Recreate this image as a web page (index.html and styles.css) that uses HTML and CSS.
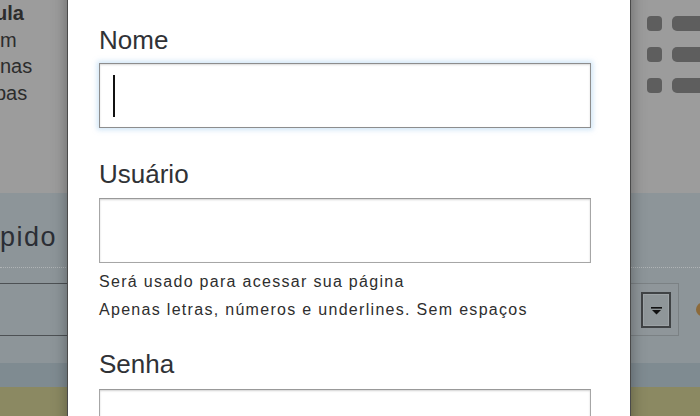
FILE: index.html
```html
<!DOCTYPE html>
<html lang="pt">
<head>
<meta charset="utf-8">
<title>Cadastro</title>
<link rel="stylesheet" href="styles.css">
</head>
<body>
<div class="page">
  <div class="top">
    <div class="intro">
      <p class="intro-line bold"><span class="cut4">ula</span></p>
      <p class="intro-line">m</p>
      <p class="intro-line">nas</p>
      <p class="intro-line"><span class="cut3">pas</span></p>
    </div>
    <ul class="menu">
      <li class="menu-item"><span class="dot"></span><span class="bar"></span></li>
      <li class="menu-item"><span class="dot"></span><span class="bar"></span></li>
      <li class="menu-item"><span class="dot"></span><span class="bar"></span></li>
    </ul>
  </div>
  <div class="content">
    <div class="section">
      <h2 class="section-title">pido</h2>
    </div>
    <div class="filter-row">
      <div class="table-part"></div>
      <div class="select">
        <div class="select-btn">
          <svg width="11" height="8" viewBox="0 0 11 8"><rect x="0" y="0" width="11" height="1.6" fill="#111"/><path d="M1 3h9l-4.5 4.5z" fill="#111"/></svg>
        </div>
      </div>
      <div class="row-end"><span class="badge"></span></div>
    </div>
    <div class="gap-band"></div>
  </div>
  <div class="blue-band"></div>
  <div class="olive-band"></div>
</div>

<div class="modal">
  <form class="form">
    <label class="label first">Nome</label>
    <div class="field focused"><span class="caret"></span></div>

    <label class="label second">Usuário</label>
    <div class="field"></div>
    <p class="help help-first">Será usado para acessar sua página</p>
    <p class="help">Apenas letras, números e underlines. Sem espaços</p>

    <label class="label third">Senha</label>
    <div class="field"></div>
  </form>
</div>
</body>
</html>
```

FILE: styles.css
```css
* { box-sizing: border-box; }
html, body {
  margin: 0;
  padding: 0;
  width: 700px;
  height: 416px;
  overflow: hidden;
  font-family: "Liberation Sans", Arial, sans-serif;
}
.page {
  width: 700px;
  height: 416px;
  display: flex;
  flex-direction: column;
  background: #9a9a9a;
}
.top {
  height: 193px;
  flex: none;
  display: flex;
  justify-content: space-between;
  background: #9c9c9c;
}
.intro {
  width: 67px;
  overflow: hidden;
}
.intro-line {
  margin: 0;
  font-size: 20px;
  line-height: 26.5px;
  color: #2c2c2c;
  white-space: nowrap;
}
.intro-line.bold { font-weight: bold; }
.cut4 { margin-left: -5px; }
.cut3 { margin-left: -5px; }
.menu {
  list-style: none;
  margin: 0;
  padding: 16px 0 0 0;
  width: 53px;
  display: flex;
  flex-direction: column;
  gap: 16px;
}
.menu-item {
  display: flex;
  gap: 10px;
  height: 15px;
}
.dot {
  width: 15px;
  height: 15px;
  border-radius: 4px;
  background: #5e5e5e;
  flex: none;
}
.bar {
  width: 40px;
  height: 15px;
  border-radius: 5px;
  background: #5e5e5e;
  flex: none;
}
.content {
  background: #8d9599;
  flex: none;
}
.section {
  height: 75px;
  border-bottom: 1px dotted #b0b4b6;
  padding-top: 28px;
}
.section-title {
  margin: 0;
  font-weight: normal;
  font-size: 27px;
  line-height: 32px;
  color: #2b2e35;
  letter-spacing: 1.5px;
}
.filter-row {
  margin-top: 15px;
  height: 53px;
  display: flex;
  align-items: stretch;
}
.table-part {
  width: 631px;
  border-top: 1px solid #4d5154;
  border-bottom: 1px solid #4d5154;
}
.select {
  width: 48px;
  border: 1px solid #7b8184;
  border-left: none;
  background: #8f969a;
  display: flex;
  align-items: center;
  padding-left: 10px;
}
.select-btn {
  width: 30px;
  height: 36px;
  border: 2px solid #404345;
  box-shadow: inset 0 0 0 1px #9da3a6;
  background: #8f9699;
  display: flex;
  align-items: center;
  justify-content: center;
}
.select-btn svg { margin-top: 2px; }
.row-end {
  flex: 1;
  position: relative;
  overflow: hidden;
}
.badge {
  position: absolute;
  left: 17px;
  top: 20px;
  width: 12px;
  height: 13px;
  border-radius: 50%;
  background: #8c6a3a;
}
.gap-band {
  height: 27px;
}
.blue-band {
  height: 24px;
  flex: none;
  background: #7f8b91;
}
.olive-band {
  flex: 1;
  background: #8b8962;
}

.modal {
  position: absolute;
  left: 67px;
  top: -20px;
  width: 564px;
  height: 460px;
  background: #ffffff;
  border-left: 1px solid #4a4a4a;
  border-right: 1px solid #4a4a4a;
  box-shadow: 0 0 14px rgba(0, 0, 0, 0.35);
}
.form {
  padding: 45px 0 0 31px;
  display: flex;
  flex-direction: column;
  align-items: flex-start;
}
.label {
  font-size: 26px;
  line-height: 30px;
  color: #303236;
}
.label.first { margin-bottom: 8px; }
.label.second { margin-top: 31px; margin-bottom: 9px; }
.label.third { margin-top: 25px; margin-bottom: 10px; }
.field {
  width: 492px;
  height: 65px;
  border: 1px solid #a6a6a6;
  border-top-color: #999;
  box-shadow: inset 0 1px 2px rgba(0, 0, 0, 0.18);
  background: #fff;
  display: flex;
  align-items: center;
  padding-left: 13px;
}
.field.focused {
  border-color: #8d8d8d;
  box-shadow: inset 0 1px 2px rgba(0, 0, 0, 0.15), 0 0 5px 2px rgba(120, 180, 230, 0.35);
}
.caret {
  width: 2px;
  height: 42px;
  background: #111;
}
.help {
  margin: 0;
  font-size: 16px;
  line-height: 28px;
  letter-spacing: 1.3px;
  color: #2e2e2e;
}
.help.help-first { margin-top: 5px; }
```
